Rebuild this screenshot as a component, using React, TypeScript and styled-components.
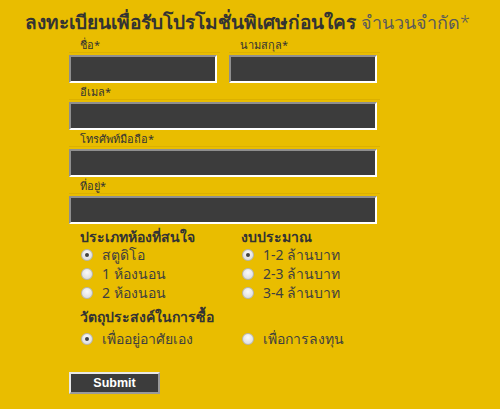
import React from 'react';
import styled, { createGlobalStyle } from 'styled-components';

const GlobalStyle = createGlobalStyle`
  html, body {
    margin: 0;
    padding: 0;
    background: #e9bd00;
  }
  body {
    font-family: 'Noto Sans', 'DejaVu Sans', sans-serif;
    color: #333;
  }
`;

const Page = styled.div`
  width: 500px;
  height: 409px;
  background: #e9bd00;
  overflow: hidden;
`;

const Title = styled.h1`
  margin: 0;
  padding: 8px 0 0 25px;
  font-size: 19px;
  line-height: 28px;
  height: 30px;
  font-weight: 700;
  color: #333;
  white-space: nowrap;
`;

const TitleNote = styled.span`
  font-weight: 300;
  font-size: 18px;
  color: #5a5a5a;
`;

const Form = styled.form`
  width: 308px;
  margin-left: 69px;
  display: flex;
  flex-direction: column;
  gap: 2px;
`;

const Row = styled.div`
  display: flex;
  gap: 12px;
`;

const Field = styled.div`
  flex: 1;
  display: flex;
  flex-direction: column;
`;

const Label = styled.label`
  display: block;
  box-sizing: border-box;
  height: 15px;
  line-height: 14px;
  padding-left: 11px;
  margin-right: -3px;
  margin-bottom: 2px;
  font-size: 11px;
  color: #333;
  border-bottom: 1px solid #dcb000;
  overflow: visible;
`;

const Input = styled.input`
  box-sizing: border-box;
  display: block;
  width: 100%;
  height: 28px;
  margin: 0;
  background: #3c3c3c;
  border: 2px solid;
  border-color: #8f8f8f #fff #fff #8f8f8f;
  color: #fff;
  outline: none;
`;

const Options = styled.div`
  display: grid;
  grid-template-columns: 161px auto;
  padding-left: 11px;
  margin-top: 3px;
`;

const Group = styled.div`
  display: flex;
  flex-direction: column;
`;

const GroupTitle = styled.div<{ $wide?: boolean }>`
  grid-column: ${p => (p.$wide ? '1 / span 2' : 'auto')};
  font-size: 14px;
  font-weight: 700;
  line-height: 16px;
  height: 16px;
  color: #333;
  margin: ${p => (p.$wide ? '7px 0 4px' : '0')};
`;

const Option = styled.label`
  display: flex;
  align-items: center;
  gap: 9px;
  height: 19px;
  font-size: 14px;
  color: #3f3f3f;
`;

const Radio = styled.span<{ $on?: boolean }>`
  box-sizing: border-box;
  width: 12px;
  height: 12px;
  margin-left: 1px;
  border-radius: 50%;
  border: 1px solid #b5b5b5;
  background: radial-gradient(circle at 50% 35%, #fafafa, #d6d6d6);
  display: flex;
  align-items: center;
  justify-content: center;

  &::after {
    content: '';
    width: 4px;
    height: 4px;
    border-radius: 50%;
    background: #444;
    display: ${p => (p.$on ? 'block' : 'none')};
  }
`;

const Submit = styled.button`
  box-sizing: border-box;
  width: 91px;
  height: 22px;
  margin-top: 22px;
  padding: 0;
  background: #3c3c3c;
  border: 2px solid;
  border-color: #e8e8e8 #9a9a9a #9a9a9a #e8e8e8;
  color: #fff;
  font-family: 'Liberation Sans', Arial, sans-serif;
  font-size: 12.5px;
  font-weight: 700;
  cursor: pointer;
`;

const rooms = ['สตูดิโอ', '1 ห้องนอน', '2 ห้องนอน'];
const budgets = ['1-2 ล้านบาท', '2-3 ล้านบาท', '3-4 ล้านบาท'];
const purposes = ['เพื่ออยู่อาศัยเอง', 'เพื่อการลงทุน'];

export default function App() {
  return (
    <Page>
      <GlobalStyle />
      <Title>
        ลงทะเบียนเพื่อรับโปรโมชั่นพิเศษก่อนใคร <TitleNote>จำนวนจำกัด*</TitleNote>
      </Title>
      <Form onSubmit={e => e.preventDefault()}>
        <Row>
          <Field>
            <Label>ชื่อ*</Label>
            <Input />
          </Field>
          <Field>
            <Label>นามสกุล*</Label>
            <Input />
          </Field>
        </Row>
        <Field>
          <Label>อีเมล*</Label>
          <Input />
        </Field>
        <Field>
          <Label>โทรศัพท์มือถือ*</Label>
          <Input />
        </Field>
        <Field>
          <Label>ที่อยู่*</Label>
          <Input />
        </Field>
        <Options>
          <Group>
            <GroupTitle>ประเภทห้องที่สนใจ</GroupTitle>
            {rooms.map((r, i) => (
              <Option key={r}>
                <Radio $on={i === 0} />
                {r}
              </Option>
            ))}
          </Group>
          <Group>
            <GroupTitle>งบประมาณ</GroupTitle>
            {budgets.map((b, i) => (
              <Option key={b}>
                <Radio $on={i === 0} />
                {b}
              </Option>
            ))}
          </Group>
          <GroupTitle $wide>วัตถุประสงค์ในการซื้อ</GroupTitle>
          {purposes.map((p, i) => (
            <Option key={p}>
              <Radio $on={i === 0} />
              {p}
            </Option>
          ))}
        </Options>
        <Submit type="submit">Submit</Submit>
      </Form>
    </Page>
  );
}
